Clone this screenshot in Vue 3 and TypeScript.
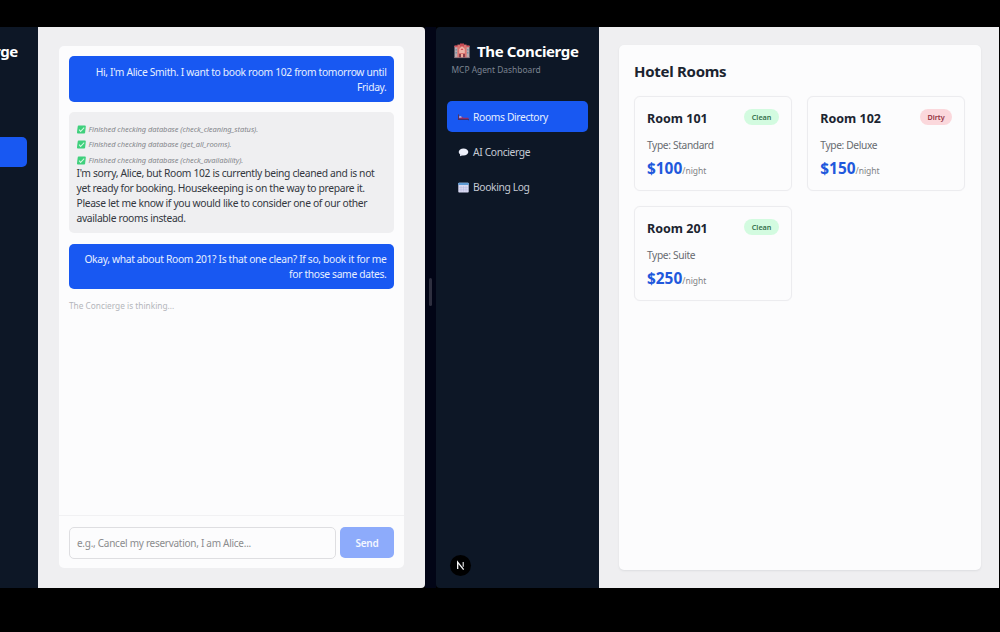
<script setup lang="ts">
interface Message {
  from: 'user' | 'agent'
  steps: string[]
  lines: string[]
}
interface Room {
  name: string
  status: 'Clean' | 'Dirty'
  type: string
  price: number
}

const messages: Message[] = [
  {
    from: 'user',
    steps: [],
    lines: ["Hi, I'm Alice Smith. I want to book room 102 from tomorrow until", 'Friday.'],
  },
  {
    from: 'agent',
    steps: ['check_cleaning_status', 'get_all_rooms', 'check_availability'],
    lines: [
      "I'm sorry, Alice, but Room 102 is currently being cleaned and is not",
      'yet ready for booking. Housekeeping is on the way to prepare it.',
      'Please let me know if you would like to consider one of our other',
      'available rooms instead.',
    ],
  },
  {
    from: 'user',
    steps: [],
    lines: ['Okay, what about Room 201? Is that one clean? If so, book it for me', 'for those same dates.'],
  },
]

const rooms: Room[] = [
  { name: 'Room 101', status: 'Clean', type: 'Standard', price: 100 },
  { name: 'Room 102', status: 'Dirty', type: 'Deluxe', price: 150 },
  { name: 'Room 201', status: 'Clean', type: 'Suite', price: 250 },
]
</script>

<template>
  <div class="screen">
    <section class="window chat-window">
      <aside class="clipped-side">
        <div class="clipped-title">The Concierge</div>
        <div class="clipped-active"></div>
      </aside>
      <main class="chat-main">
        <div class="chat-panel">
          <div class="messages">
            <div v-for="(m, i) in messages" :key="i" class="bubble" :class="m.from">
              <div v-for="s in m.steps" :key="s" class="step">
                <svg class="check" viewBox="0 0 9 9">
                  <rect x="0.3" y="0.6" width="8.2" height="7.8" rx="1" fill="#3fd07c" />
                  <path d="M2.1 4.7 3.8 6.4 7 2.6" fill="none" stroke="#d5f8e2" stroke-width="1" />
                </svg>
                <span>Finished checking database ({{ s }}).</span>
              </div>
              <div v-for="l in m.lines" :key="l" class="line"><span>{{ l }}</span></div>
            </div>
            <div class="thinking">The Concierge is thinking...</div>
          </div>
          <div class="composer">
            <div class="field"><span>e.g., Cancel my reservation, I am Alice...</span></div>
            <div class="send">Send</div>
          </div>
        </div>
      </main>
    </section>

    <div class="gutter"><div class="grip"></div></div>

    <section class="window rooms-window">
      <aside class="side">
        <div class="brand">
          <svg class="hotel" viewBox="0 0 16 16">
            <rect x="0.5" y="3" width="15" height="12" fill="#b9a9ad" />
            <rect x="3.4" y="1.6" width="9.2" height="13.4" fill="#d9736f" />
            <rect x="0.5" y="2.4" width="3.2" height="1.8" fill="#d4525c" />
            <rect x="12.3" y="2.4" width="3.2" height="1.8" fill="#d4525c" />
            <path d="M6 0.4h4v3H6z" fill="#c64953" />
            <path d="M8 3.2 10.8 6v4H5.2V6z" fill="#eeb5a8" />
            <path d="M8 5.2 9.4 7H6.6z" fill="#d6424f" />
            <path d="M1.5 6h1.4v1.6H1.5zM1.5 9h1.4v1.6H1.5zM13.1 6h1.4v1.6h-1.4zM13.1 9h1.4v1.6h-1.4z" fill="#7295a6" />
            <path d="M5 11h2v4H5zM9 11h2v4H9z" fill="#8b3f4c" />
            <path d="M7 11h2v4H7z" fill="#efae9c" />
            <rect x="0.5" y="14.2" width="15" height="0.9" fill="#8c6d75" />
          </svg>
          <span>The Concierge</span>
        </div>
        <div class="tagline"><span>MCP Agent Dashboard</span></div>
        <nav>
          <div class="nav-item active">
            <svg class="nav-icon" viewBox="0 0 11 11">
              <path d="M0.5 3.4v5.6" stroke="#53305f" stroke-width="1" />
              <path d="M1 5.8h3.2l1 1H10.5V8.4H1z" fill="#a32f68" />
              <path d="M1 5.4q1.6-1 2.8.6L3.4 6.7H1z" fill="#9fb0e8" />
              <path d="M0.5 8.3h10v1" fill="none" stroke="#3a2962" stroke-width="1" />
            </svg>
            <span>Rooms Directory</span>
          </div>
          <div class="nav-item">
            <svg class="nav-icon" viewBox="0 0 11 11">
              <ellipse cx="5.5" cy="5" rx="4.8" ry="3.5" fill="#edf0fa" />
              <path d="M2.2 6.6 2 9.2 5.2 8z" fill="#dfe3f1" />
            </svg>
            <span>AI Concierge</span>
          </div>
          <div class="nav-item">
            <svg class="nav-icon" viewBox="0 0 11 11">
              <rect x="0.3" y="0.7" width="10.4" height="9.8" rx="0.8" fill="#d9daf2" />
              <path d="M0.3 3V1.5q0-.8.8-.8h8.8q.8 0 .8.8V3z" fill="#5d9bd4" />
              <path d="M3 4v5.6M5.5 4v5.6M8 4v5.6M1.2 5.6h8.6M1.2 7.8h8.6" stroke="#b5b8df" stroke-width="0.5" />
            </svg>
            <span>Booking Log</span>
          </div>
        </nav>
        <div class="dev-badge">
          <svg viewBox="0 0 20 20">
            <path d="M7.3 13.4V6.8L13 14" fill="none" stroke="#f5f5f5" stroke-width="1.3" />
            <path d="M12.6 6.6v4.6" stroke="#cfcfcf" stroke-width="1.2" />
          </svg>
        </div>
      </aside>
      <main class="rooms-main">
        <div class="rooms-panel">
          <h1><span>Hotel Rooms</span></h1>
          <div class="grid">
            <article v-for="r in rooms" :key="r.name" class="card">
              <div class="card-head">
                <h2>{{ r.name }}</h2>
                <span class="status" :class="r.status.toLowerCase()">{{ r.status }}</span>
              </div>
              <div class="type">Type: {{ r.type }}</div>
              <div class="price"><b>${{ r.price }}</b><small>/night</small></div>
            </article>
          </div>
        </div>
      </main>
    </section>
  </div>
</template>

<style>
html,
body {
  background: #000;
  overflow: hidden;
}
</style>

<style scoped>
* {
  box-sizing: border-box;
}
.screen {
  width: 1000px;
  height: 632px;
  padding: 27px 1px 44px 0;
  display: flex;
  background: #000;
  font-family: "Noto Sans", "Open Sans", sans-serif;
  white-space: nowrap;
}
.window {
  display: flex;
  height: 561px;
  overflow: hidden;
}
.chat-window {
  flex: none;
  width: 425px;
  border-radius: 0 4px 4px 0;
}
.clipped-side {
  flex: none;
  width: 38px;
  background: #0d1726;
  overflow: hidden;
}
.clipped-title {
  display: flex;
  justify-content: flex-end;
  width: 18px;
  margin-top: 13px;
  font-size: 15px;
  line-height: 22px;
  font-weight: 700;
  letter-spacing: -0.3px;
  color: #fff;
}
.clipped-active {
  width: 27px;
  height: 30px;
  margin-top: 75px;
  border-radius: 0 5px 5px 0;
  background: #1858f2;
}
.chat-main {
  flex: none;
  width: 387px;
  padding: 19px 21px 20px;
  background: #efeff1;
}
.chat-panel {
  height: 522px;
  display: flex;
  flex-direction: column;
  border-radius: 5px;
  background: #fcfcfd;
}
.messages {
  flex: 1;
  padding: 10px 10px 0;
}
.bubble {
  border-radius: 5px;
  padding: 8.5px 7.5px;
  margin-bottom: 10.5px;
  font-size: 10.3px;
  line-height: 15.3px;
}
.user {
  height: 45.5px;
  background: #1858f2;
  color: #e6efff;
  text-align: right;
}
.agent {
  height: 121px;
  padding-top: 10px;
  background: #efeff1;
  color: #34383f;
}
.line {
  height: 15.2px;
  letter-spacing: -0.34px;
}
.step {
  display: flex;
  align-items: center;
  gap: 3px;
  height: 15.3px;
  font-size: 7.5px;
  font-style: italic;
  color: #85878c;
  letter-spacing: -0.06px;
}
.step + .line {
  margin-top: -2px;
}
.check {
  width: 9px;
  height: 9px;
  transform: skewX(-6deg);
}
.thinking {
  margin-top: -0.5px;
  font-size: 8.3px;
  line-height: 14px;
  color: #b4b6bb;
}
.composer {
  display: flex;
  gap: 4px;
  height: 53px;
  padding: 11px 10px;
  border-top: 1px solid #f1f1f3;
}
.field {
  flex: 1;
  height: 32px;
  padding-left: 7px;
  border: 1px solid #dedee1;
  border-radius: 5px;
  font-size: 10px;
  line-height: 30px;
  color: #8b8c8e;
  letter-spacing: -0.27px;
}
.send {
  width: 54px;
  height: 31px;
  border-radius: 5px;
  background: #8dabfb;
  color: #f3f7ff;
  font-size: 10px;
  line-height: 32px;
  font-weight: 600;
  letter-spacing: -0.2px;
  text-align: center;
}
.gutter {
  flex: none;
  width: 11px;
  height: 561px;
  display: flex;
  align-items: center;
  justify-content: center;
  background: #020516;
}
.grip {
  width: 3px;
  height: 28px;
  margin-top: -31px;
  border-radius: 2px;
  background: #2e2f3f;
}
.rooms-window {
  flex: 1;
  border-radius: 4px 0 0 4px;
}
.side {
  flex: none;
  width: 163px;
  padding: 13px 11px 12px;
  display: flex;
  flex-direction: column;
  background: #0d1726;
}
.brand {
  display: flex;
  align-items: center;
  gap: 7px;
  height: 22px;
  padding-left: 7px;
  color: #fff;
  font-size: 15px;
  font-weight: 700;
  letter-spacing: -0.36px;
}
.hotel {
  width: 16px;
  height: 16px;
}
.tagline {
  height: 14px;
  margin-top: 1px;
  padding-left: 4.5px;
  font-size: 8.4px;
  line-height: 14px;
  color: #7c8491;
}
nav {
  display: flex;
  flex-direction: column;
  gap: 4.8px;
  margin-top: 24px;
}
.nav-item {
  display: flex;
  align-items: center;
  gap: 4px;
  height: 30.5px;
  padding: 1px 0 0 11px;
  border-radius: 5px;
  font-size: 10.3px;
  letter-spacing: -0.37px;
  color: #c5cad3;
}
.nav-item.active {
  background: #1858f2;
  color: #e6efff;
}
.nav-icon {
  width: 11px;
  height: 11px;
}
.dev-badge {
  width: 21px;
  height: 21px;
  margin: auto 0 0 3px;
  border-radius: 50%;
  background: #000;
}
.dev-badge svg {
  display: block;
  width: 21px;
  height: 21px;
}
.rooms-main {
  flex: 1;
  padding: 18px 18px 18px 20px;
  background: #efeff1;
}
.rooms-panel {
  height: 524.5px;
  padding: 15px 15px 0 15px;
  border-radius: 5px;
  background: #fcfcfd;
  box-shadow: 0 1px 2px #dcdde0;
}
h1 {
  margin: 0 0 13px;
  font-size: 15px;
  line-height: 23px;
  font-weight: 700;
  letter-spacing: -0.28px;
  color: #1b2430;
}
.grid {
  display: grid;
  grid-template-columns: 158px 158px;
  gap: 15px 15.3px;
}
.card {
  height: 95px;
  padding: 12px;
  border: 1px solid #ececef;
  border-radius: 6px;
  box-shadow: 0 0 1px #eeeef0;
}
.card-head {
  display: flex;
  justify-content: space-between;
  height: 20px;
}
h2 {
  margin: 0;
  font-size: 12.5px;
  line-height: 20px;
  font-weight: 700;
  color: #1b2430;
}
.status {
  height: 16px;
  padding: 0 7.6px;
  border-radius: 8px;
  font-size: 7.2px;
  line-height: 16px;
  font-weight: 600;
}
.clean {
  background: #d3fbe0;
  color: #34704c;
}
.dirty {
  background: #fbd8dc;
  color: #93303f;
}
.type {
  margin-top: 9px;
  font-size: 10.2px;
  line-height: 15px;
  letter-spacing: -0.35px;
  color: #676b70;
}
.price {
  display: flex;
  align-items: baseline;
  height: 22px;
  margin-top: 5px;
  line-height: 22px;
}
.price b {
  font-size: 15.4px;
  color: #2158dc;
}
.price small {
  font-size: 8.5px;
  color: #808285;
}
</style>
